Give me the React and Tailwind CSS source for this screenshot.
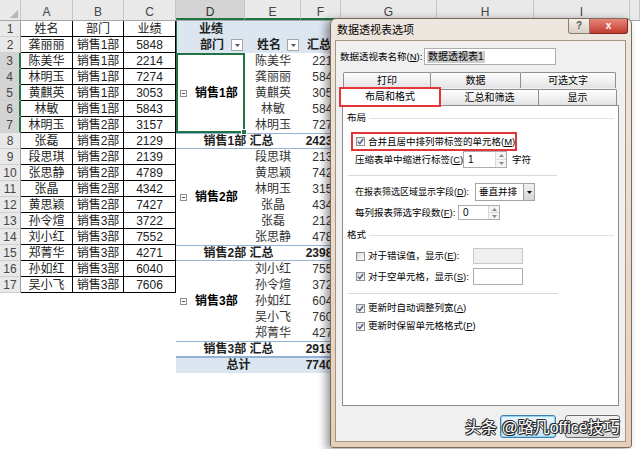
import React from 'react';

const colHeads = [
  ['A', 'w-[52px]'], ['B', 'w-[51px]'], ['C', 'w-[52px]'], ['D', 'w-[69px]'], ['E', 'w-[56px]'],
  ['F', 'w-[40px]'], ['G', 'w-[96px]'], ['H', 'w-[97px]'], ['I', 'w-[96px]'], ['', 'w-[10px]'],
];

const data = [
  ['姓名', '部门', '业绩'],
  ['龚丽丽', '销售1部', '5848'],
  ['陈美华', '销售1部', '2214'],
  ['林明玉', '销售1部', '7274'],
  ['黄麒英', '销售1部', '3053'],
  ['林敏', '销售1部', '5843'],
  ['林明玉', '销售2部', '3157'],
  ['张磊', '销售2部', '2129'],
  ['段思琪', '销售2部', '2139'],
  ['张思静', '销售2部', '4789'],
  ['张晶', '销售2部', '4342'],
  ['黄思颖', '销售2部', '7427'],
  ['孙令煊', '销售3部', '3722'],
  ['刘小红', '销售3部', '7552'],
  ['郑菁华', '销售3部', '4271'],
  ['孙如红', '销售3部', '6040'],
  ['吴小飞', '销售3部', '7606'],
];

const groups = [
  { name: '销售1部', total: '24232', selected: true, rows: [['陈美华', '2214'], ['龚丽丽', '5848'], ['黄麒英', '3053'], ['林敏', '5843'], ['林明玉', '7274']] },
  { name: '销售2部', total: '23983', rows: [['段思琪', '2139'], ['黄思颖', '7427'], ['林明玉', '3157'], ['张晶', '4342'], ['张磊', '2129'], ['张思静', '4789']] },
  { name: '销售3部', total: '29191', rows: [['刘小红', '7552'], ['孙令煊', '3722'], ['孙如红', '6040'], ['吴小飞', '7606'], ['郑菁华', '4271']] },
];

function FilterBtn() {
  return (
    <div className="w-[12px] h-[12px] shrink-0 border border-[#a6a6a6] bg-white flex items-center justify-center">
      <svg width="5" height="3" viewBox="0 0 5 3"><path d="M0 0 L5 0 L2.5 3Z" fill="#555" /></svg>
    </div>
  );
}

function MinusBox() {
  return (
    <div className="w-[7px] h-[7px] shrink-0 border border-[#8d8d8d] bg-white flex items-center justify-center">
      <div className="w-[3px] h-px bg-[#4f4f4f]" />
    </div>
  );
}

function Check({ on }) {
  return (
    <div className="w-[9px] h-[9px] shrink-0 border border-[#8f8f8f] bg-linear-to-br from-[#d9d9d9] to-white flex items-center justify-center">
      {on && (
        <svg width="7" height="7" viewBox="0 0 7 7">
          <path d="M1 3.6 L2.8 5.6 L6.2 1" fill="none" stroke="#4b5e84" strokeWidth="1.4" />
        </svg>
      )}
    </div>
  );
}

function Spin({ value, className }) {
  return (
    <div className={`flex shrink-0 border border-[#abadb3] bg-white ${className}`}>
      <div className="flex-1 flex items-center pl-[4px] text-[10px]">{value}</div>
      <div className="w-[11px] flex flex-col border-l border-[#dadada]">
        <div className="flex-1 flex items-center justify-center bg-[#f4f4f4] border-b border-[#dadada]">
          <svg width="5" height="3" viewBox="0 0 5 3"><path d="M0 3 L2.5 0 L5 3Z" fill="#8a8a8a" /></svg>
        </div>
        <div className="flex-1 flex items-center justify-center bg-[#f4f4f4]">
          <svg width="5" height="3" viewBox="0 0 5 3"><path d="M0 0 L5 0 L2.5 3Z" fill="#8a8a8a" /></svg>
        </div>
      </div>
    </div>
  );
}

function Sheet() {
  return (
    <div className="text-[12px] leading-[16px] text-[#222]">
      {/* column headers */}
      <div className="flex h-[21px] bg-[#e9e9e9] border-b border-[#a8a8a8] text-[#444]">
        <div className="w-[21px] relative border-r border-[#c6c6c6]">
          <svg className="absolute right-[2px] bottom-[2px]" width="8" height="8" viewBox="0 0 8 8">
            <path d="M8 0 L8 8 L0 8Z" fill="#b5b5b5" />
          </svg>
        </div>
        {colHeads.map(([c, w]) => (
          <div
            key={c + w}
            className={`${w} h-full flex justify-center pt-[5px] leading-[14px] border-r border-r-[#c6c6c6] ${
              c === 'D' ? 'bg-[#d4d4d4] text-[#333]' : ''
            } ${c === 'D' || c === 'E' || c === 'F' ? 'border-b-2 border-b-[#217346]' : ''}`}
          >
            {c}
          </div>
        ))}
      </div>

      <div className="flex">
        {/* row numbers */}
        <div className="w-[21px] flex flex-col">
          {data.map((_, i) => {
            const sel = i >= 2 && i <= 6;
            return (
              <div
                key={i}
                className={`h-[16px] flex items-center justify-center text-[#444] border-b border-b-[#d0d0d0] ${
                  sel ? 'bg-[#d4d4d4] border-r-2 border-r-[#217346]' : 'bg-[#e9e9e9] border-r border-r-[#9e9e9e]'
                }`}
              >
                {i + 1}
              </div>
            );
          })}
        </div>

        {/* source table */}
        <div className="w-[155px] flex flex-col">
          {data.map((r, i) => (
            <div key={i} className="flex h-[16px]">
              <div className="w-[52px] text-center border-r border-b border-black">{r[0]}</div>
              <div className="w-[51px] text-center border-r border-b border-black">{r[1]}</div>
              <div className="w-[52px] text-center border-r border-b border-black">{r[2]}</div>
            </div>
          ))}
        </div>

        {/* pivot */}
        <div className="w-[165px] flex flex-col">
          <div className="flex h-[16px] bg-[#dce6f1] font-bold">
            <div className="w-[69px] text-center border-l border-l-[#217346]">业绩</div>
          </div>
          <div className="flex h-[16px] bg-[#dce6f1] font-bold">
            <div className="w-[69px] flex items-center pl-[23px] border-l border-l-[#217346]">
              <span>部门</span>
              <span className="ml-[7px]"><FilterBtn /></span>
            </div>
            <div className="w-[56px] flex items-center pl-[12px]">
              <span>姓名</span>
              <span className="ml-[6px]"><FilterBtn /></span>
            </div>
            <div className="w-[40px] pl-[6px]">汇总</div>
          </div>

          {groups.map((g) => (
            <React.Fragment key={g.name}>
              <div className="flex">
                <div
                  className={`w-[69px] flex items-center ${
                    g.selected ? 'relative border-2 border-[#217346] pl-[2px]' : 'pl-[4px]'
                  }`}
                >
                  <MinusBox />
                  <span className="ml-[8px] font-bold text-black">{g.name}</span>
                  {g.selected && (
                    <div className="absolute -right-[4px] -bottom-[4px] w-[6px] h-[6px] bg-[#217346] border border-white" />
                  )}
                </div>
                <div className="flex flex-col text-[#333]">
                  {g.rows.map(([n, v]) => (
                    <div key={n} className="flex h-[16px]">
                      <div className="w-[56px] text-center">{n}</div>
                      <div className="w-[40px] text-right pr-[2px]">{v}</div>
                    </div>
                  ))}
                </div>
              </div>
              <div className="flex h-[16px] leading-[14px] border-y border-[#95b3d7] font-bold">
                <div className="w-[125px] text-center">{g.name} 汇总</div>
                <div className="w-[40px] text-right pr-[2px]">{g.total}</div>
              </div>
            </React.Fragment>
          ))}
          <div className="flex h-[16px] leading-[15px] bg-[#dce6f1] border-t border-[#95b3d7] font-bold">
            <div className="w-[125px] text-center">总计</div>
            <div className="w-[40px] text-right pr-[2px]">77406</div>
          </div>
        </div>
      </div>
    </div>
  );
}

function Tab({ label, className }) {
  return (
    <div
      className={`flex items-center justify-center border border-[#8e8f8f] -ml-px first:ml-0 rounded-t-[2px] bg-linear-to-b from-white to-[#e3e3e3] text-[10px] ${className}`}
    >
      {label}
    </div>
  );
}

function Dialog() {
  return (
    <div className="absolute left-[330px] top-[18px] w-[302px] h-[430px] flex flex-col rounded-t-[6px] rounded-b-[3px] border border-[#7d6a58] bg-linear-to-b from-[#eee7df] to-[#e6cfb8] shadow-[-4px_2px_8px_rgba(0,0,0,0.4)] text-[9.5px] leading-[12px] text-black">
      {/* title bar */}
      <div className="flex h-[21px]">
        <div className="pl-[6px] pt-[5px] text-[11px] leading-[12px]">数据透视表选项</div>
        <div className="ml-auto mr-[3px] flex h-[15px]">
          <div className="w-[22px] flex items-center justify-center border border-[#8b7c6f] border-t-0 rounded-bl-[3px] bg-linear-to-b from-[#f5f0ea] to-[#d9cec3] text-[10px] font-bold text-[#555]">
            ?
          </div>
          <div className="w-[38px] flex items-center justify-center border border-[#7a2a24] border-t-0 border-l-0 rounded-br-[3px] bg-linear-to-b from-[#e8857a] to-[#c23a2f] text-white text-[10px] font-bold">
            x
          </div>
        </div>
      </div>

      {/* client area */}
      <div className="ml-[4px] w-[291px] h-[402px] flex flex-col border border-[#a39585] bg-[#f0f0f0]">
        <div className="mt-[7px] ml-[4px] flex items-center h-[17px]">
          <div className="w-[84px] shrink-0 whitespace-nowrap">
            数据透视表名称(<span className="underline">N</span>):
          </div>
          <div className="w-[132px] h-[17px] border border-[#abadb3] bg-white flex items-center pl-[2px]">
            <span className="bg-[#cdcdcd] px-[1px] text-[10px]">数据透视表1</span>
          </div>
        </div>

        {/* tabs */}
        <div className="mt-[7px] ml-[7px] flex h-[16px]">
          <Tab label="打印" className="w-[88px] border-b-0" />
          <Tab label="数据" className="w-[91px] border-b-0" />
          <Tab label="可选文字" className="w-[96px] border-b-0" />
        </div>
        <div className="ml-[3px] flex items-end h-[17px]">
          <div className="relative z-10 -mb-[2px] w-[102px] h-[20px] flex items-center justify-center border-2 border-[#e63438] bg-white text-[10px]">
            布局和格式
          </div>
          <Tab label="汇总和筛选" className="w-[99px] h-[16px] border-b-0" />
          <Tab label="显示" className="w-[79px] h-[16px] border-b-0" />
        </div>

        {/* panel */}
        <div className="ml-[6px] w-[277px] h-[301px] flex flex-col border border-[#898c95] bg-white">
          <div className="mt-[6px] px-[4px] flex items-center h-[12px]">
            <span>布局</span>
            <div className="ml-[3px] flex-1 h-px bg-[#dde3ea]" />
          </div>
          <div className="mt-[8px] ml-[8px] w-[166px] h-[19px] flex items-center pl-[3px] border-2 border-[#e63438]">
            <Check on />
            <span className="ml-[3px] whitespace-nowrap">
              合并且居中排列带标签的单元格(<span className="underline">M</span>)
            </span>
          </div>
          <div className="ml-[12px] h-[17px] flex items-center">
            <div className="w-[108px] shrink-0 whitespace-nowrap">
              压缩表单中缩进行标签(<span className="underline">C</span>):
            </div>
            <Spin value="1" className="w-[44px] h-[17px]" />
            <span className="ml-[5px]">字符</span>
          </div>
          <div className="mt-[7px] ml-[5px] w-[209px] h-px bg-[#d9d9d9]" />
          <div className="mt-[7px] ml-[12px] h-[18px] flex items-center">
            <div className="w-[120px] shrink-0 whitespace-nowrap text-[9px]">
              在报表筛选区域显示字段(<span className="underline">D</span>):
            </div>
            <div className="w-[60px] h-[18px] flex border border-[#a3a3a3] bg-white">
              <div className="flex-1 flex items-center pl-[3px]">垂直并排</div>
              <div className="w-[11px] flex items-center justify-center bg-linear-to-b from-[#f2f2f2] to-[#d6d6d6] border-l border-[#9a9a9a]">
                <svg width="5" height="3" viewBox="0 0 5 3"><path d="M0 0 L5 0 L2.5 3Z" fill="#111" /></svg>
              </div>
            </div>
          </div>
          <div className="mt-[4px] ml-[12px] h-[15px] flex items-center">
            <div className="w-[103px] shrink-0 whitespace-nowrap">
              每列报表筛选字段数(<span className="underline">F</span>):
            </div>
            <Spin value="0" className="w-[42px] h-[15px]" />
          </div>
          <div className="mt-[9px] px-[4px] flex items-center h-[12px]">
            <span>格式</span>
            <div className="ml-[3px] flex-1 h-px bg-[#dde3ea]" />
          </div>
          <div className="mt-[7px] ml-[13px] h-[16px] flex items-center">
            <Check />
            <div className="ml-[3px] w-[105px] shrink-0 whitespace-nowrap">
              对于错误值，显示(<span className="underline">E</span>):
            </div>
            <div className="w-[50px] h-[16px] border border-[#c9c9c9] bg-[#efefef]" />
          </div>
          <div className="mt-[4px] ml-[13px] h-[17px] flex items-center">
            <Check on />
            <div className="ml-[3px] w-[105px] shrink-0 whitespace-nowrap">
              对于空单元格，显示(<span className="underline">S</span>):
            </div>
            <div className="w-[50px] h-[17px] border border-[#abadb3] bg-white" />
          </div>
          <div className="mt-[8px] ml-[5px] w-[210px] h-px bg-[#d9d9d9]" />
          <div className="mt-[8px] ml-[13px] h-[12px] flex items-center">
            <Check on />
            <span className="ml-[3px]">
              更新时自动调整列宽(<span className="underline">A</span>)
            </span>
          </div>
          <div className="mt-[6px] ml-[13px] h-[12px] flex items-center">
            <Check on />
            <span className="ml-[3px]">
              更新时保留单元格格式(<span className="underline">P</span>)
            </span>
          </div>
        </div>

        {/* buttons */}
        <div className="mt-[9px] pr-[5px] flex justify-end gap-[9px]">
          <div className="w-[56px] h-[23px] flex items-center justify-center rounded-[3px] border border-[#3c7fb1] bg-linear-to-b from-[#eaf6fd] to-[#c4e5f6] shadow-[inset_0_0_0_1px_#94d3f2] text-[10px]">
            确定
          </div>
          <div className="w-[55px] h-[23px] flex items-center justify-center rounded-[3px] border border-[#707070] bg-linear-to-b from-[#f2f2f2] to-[#d8d8d8] text-[10px]">
            取消
          </div>
        </div>
      </div>
    </div>
  );
}

export default function App() {
  return (
    <div className="relative w-[640px] h-[449px] overflow-hidden bg-white font-['Liberation_Sans','Noto_Sans_CJK_SC',sans-serif]">
      <Sheet />
      <Dialog />
      <div className="absolute left-[465px] top-[418px] text-[16px] leading-[19px] text-white whitespace-nowrap [text-shadow:1px_0_#2b2b2b,-1px_0_#2b2b2b,0_1px_#2b2b2b,0_-1px_#2b2b2b,1px_1px_#2b2b2b,-1px_-1px_#2b2b2b]">
        头条 @路凡office技巧
      </div>
    </div>
  );
}
